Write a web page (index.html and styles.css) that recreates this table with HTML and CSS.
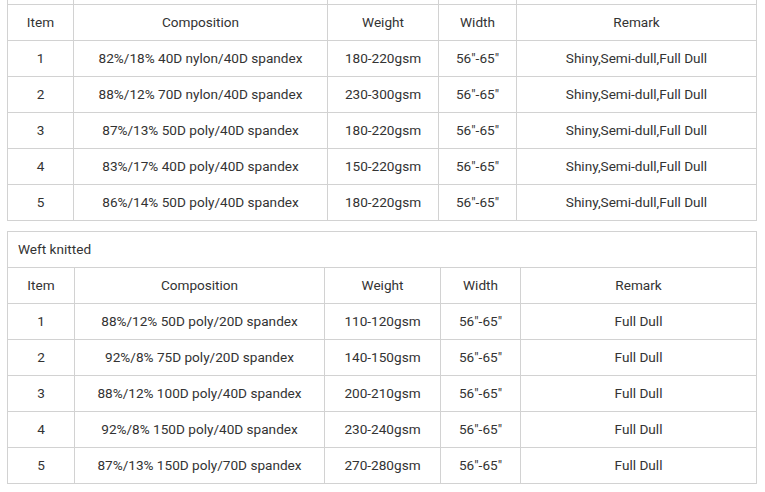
FILE: index.html
```html
<!DOCTYPE html>
<html>
<head>
<meta charset="utf-8">
<link rel="stylesheet" href="styles.css">
</head>
<body>
<div class="page">
  <table class="spec spec-warp">
    <colgroup>
      <col class="w-item"><col class="w-comp"><col class="w-weight"><col class="w-width"><col class="w-remark">
    </colgroup>
    <tr class="hidden-row"><td></td><td></td><td></td><td></td><td></td></tr>
    <tr><td>Item</td><td>Composition</td><td>Weight</td><td>Width</td><td>Remark</td></tr>
    <tr><td>1</td><td>82%/18% 40D nylon/40D spandex</td><td>180-220gsm</td><td>56"-65"</td><td>Shiny,Semi-dull,Full Dull</td></tr>
    <tr><td>2</td><td>88%/12% 70D nylon/40D spandex</td><td>230-300gsm</td><td>56"-65"</td><td>Shiny,Semi-dull,Full Dull</td></tr>
    <tr><td>3</td><td>87%/13% 50D poly/40D spandex</td><td>180-220gsm</td><td>56"-65"</td><td>Shiny,Semi-dull,Full Dull</td></tr>
    <tr><td>4</td><td>83%/17% 40D poly/40D spandex</td><td>150-220gsm</td><td>56"-65"</td><td>Shiny,Semi-dull,Full Dull</td></tr>
    <tr><td>5</td><td>86%/14% 50D poly/40D spandex</td><td>180-220gsm</td><td>56"-65"</td><td>Shiny,Semi-dull,Full Dull</td></tr>
  </table>

  <table class="spec spec-weft">
    <colgroup>
      <col class="w-item"><col class="w-comp"><col class="w-weight"><col class="w-width"><col class="w-remark">
    </colgroup>
    <tr><td class="caption" colspan="5">Weft knitted</td></tr>
    <tr><td>Item</td><td>Composition</td><td>Weight</td><td>Width</td><td>Remark</td></tr>
    <tr><td>1</td><td>88%/12% 50D poly/20D spandex</td><td>110-120gsm</td><td>56"-65"</td><td>Full Dull</td></tr>
    <tr><td>2</td><td>92%/8% 75D poly/20D spandex</td><td>140-150gsm</td><td>56"-65"</td><td>Full Dull</td></tr>
    <tr><td>3</td><td>88%/12% 100D poly/40D spandex</td><td>200-210gsm</td><td>56"-65"</td><td>Full Dull</td></tr>
    <tr><td>4</td><td>92%/8% 150D poly/40D spandex</td><td>230-240gsm</td><td>56"-65"</td><td>Full Dull</td></tr>
    <tr><td>5</td><td>87%/13% 150D poly/70D spandex</td><td>270-280gsm</td><td>56"-65"</td><td>Full Dull</td></tr>
  </table>
</div>
</body>
</html>
```

FILE: styles.css
```css
html, body {
  margin: 0;
  padding: 0;
  background: #ffffff;
}
.page {
  padding-left: 7px;
  margin-top: -32px;
  font-family: Roboto, "Liberation Sans", sans-serif;
  font-size: 13.6px;
  color: #333333;
}
.spec {
  border-collapse: collapse;
  table-layout: fixed;
  width: 750px;
}
.spec td {
  border: 1px solid #d2d2d2;
  height: 34px;
  padding: 0 0 1px 0;
  text-align: center;
  vertical-align: middle;
  white-space: nowrap;
}
.spec td.caption {
  text-align: left;
  padding-left: 10px;
}
.spec-weft {
  margin-top: 10px;
}
.spec-warp .w-item { width: 66px; }
.spec-warp .w-comp { width: 254px; }
.spec-warp .w-weight { width: 111px; }
.spec-warp .w-width { width: 78px; }
.spec-warp .w-remark { width: 240px; }
.spec-weft .w-item { width: 67px; }
.spec-weft .w-comp { width: 250px; }
.spec-weft .w-weight { width: 116px; }
.spec-weft .w-width { width: 80px; }
.spec-weft .w-remark { width: 236px; }
```
